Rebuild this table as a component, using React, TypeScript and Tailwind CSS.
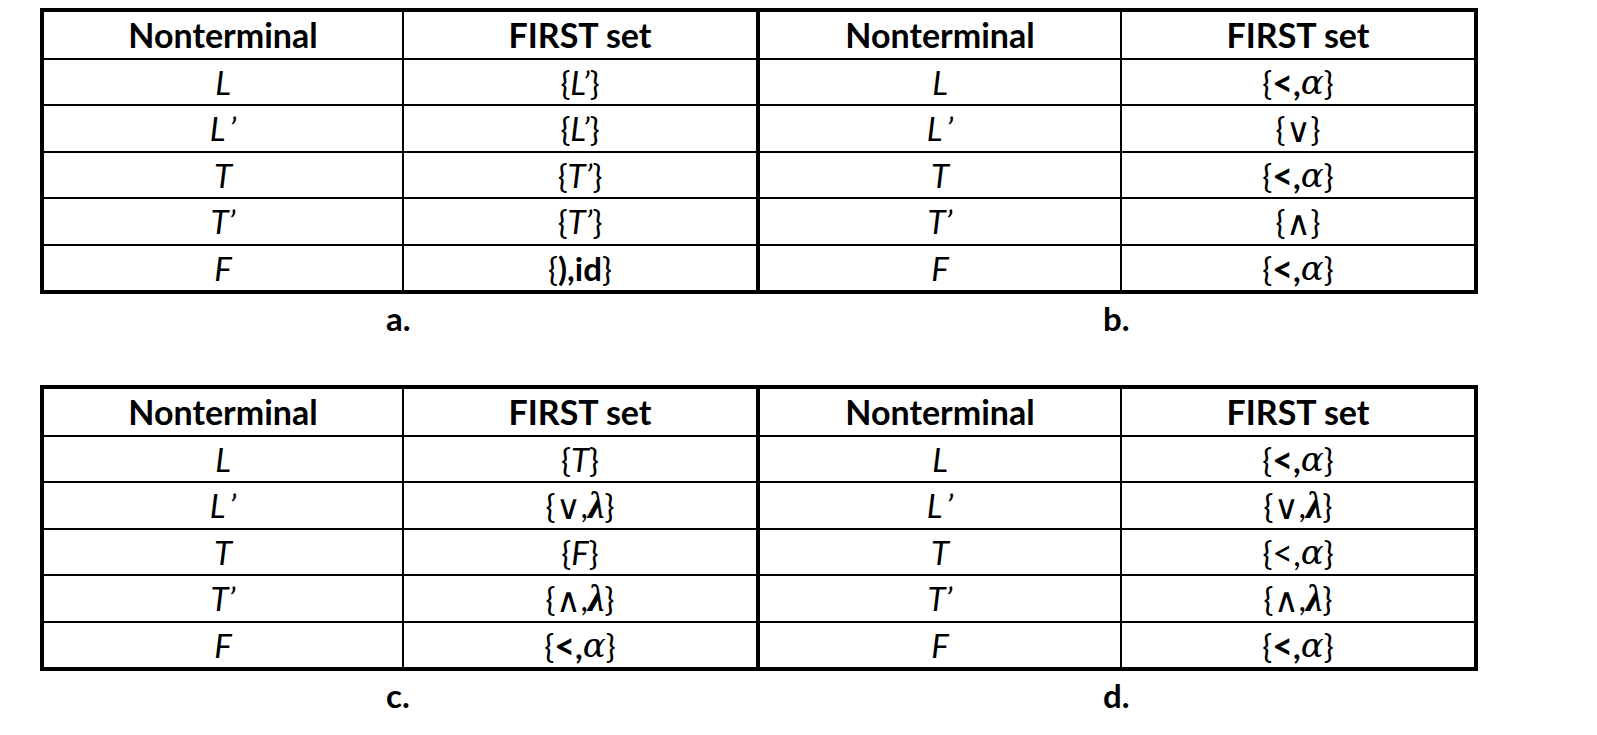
import React from "react";

const serif = { fontFamily: '"Liberation Serif", "DejaVu Serif", serif' };
const dejavu = { fontFamily: '"DejaVu Serif", "Liberation Serif", serif' };

const I = ({ children }: { children: React.ReactNode }) => (
  <span className="italic">{children}</span>
);

const Alpha = () => (
  <span className="italic text-[34px] leading-none" style={dejavu}>
    α
  </span>
);

const Lambda = () => (
  <span className="font-bold italic text-[37px] leading-none" style={serif}>
    λ
  </span>
);

const Lt = ({ bold = true }: { bold?: boolean }) => (
  <span className={bold ? "font-bold" : ""}>
    <span className="text-[36px] leading-none">&lt;</span>,
  </span>
);

const Or = () => <span className="text-[34px] leading-none">∨</span>;
const And = () => <span className="text-[34px] leading-none">∧</span>;

type Row = [React.ReactNode, React.ReactNode, React.ReactNode, React.ReactNode];

const names = [
  <I>L</I>,
  <I>L{"\u2009"}’</I>,
  <I>T</I>,
  <I>T’</I>,
  <I>F</I>,
];

const ltAlpha = (bold = true) => (
  <>
    {"{"}
    <Lt bold={bold} />
    <Alpha />
    {"}"}
  </>
);

const topRows: Row[] = [
  [names[0], <>{"{"}<I>L’</I>{"}"}</>, names[0], ltAlpha()],
  [names[1], <>{"{"}<I>L’</I>{"}"}</>, names[1], <>{"{"}<Or />{"}"}</>],
  [names[2], <>{"{"}<I>T’</I>{"}"}</>, names[2], ltAlpha()],
  [names[3], <>{"{"}<I>T’</I>{"}"}</>, names[3], <>{"{"}<And />{"}"}</>],
  [names[4], <>{"{"}<span className="font-bold">),id</span>{"}"}</>, names[4], ltAlpha()],
];

const bottomRows: Row[] = [
  [names[0], <>{"{"}<I>T</I>{"}"}</>, names[0], ltAlpha()],
  [
    names[1],
    <>{"{"}<Or />,<Lambda /> {"}"}</>,
    names[1],
    <>{"{"}<Or />,<Lambda /> {"}"}</>,
  ],
  [names[2], <>{"{"}<I>F</I>{"}"}</>, names[2], ltAlpha(false)],
  [
    names[3],
    <>{"{"}<And />,<Lambda />{"}"}</>,
    names[3],
    <>{"{"}<And />,<Lambda />{"}"}</>,
  ],
  [names[4], ltAlpha(), names[4], ltAlpha()],
];

const rowHeights = ["h-[46px]", "h-[47px]", "h-[46px]", "h-[47px]", "h-[46px]"];
const colBorders = ["border-r-2", "border-r-4", "border-r-2", ""];

const FirstTable = ({ rows }: { rows: Row[] }) => (
  <div className="grid w-[1438px] grid-cols-[360px_356px_362px_352px] border-4 border-black">
    {["Nonterminal", "FIRST set", "Nonterminal", "FIRST set"].map((h, i) => (
      <div
        key={h + i}
        className={`flex h-[46px] items-center justify-center border-black text-[34px] font-bold ${colBorders[i]}`}
      >
        {h}
      </div>
    ))}
    {rows.map((row, r) =>
      row.map((cell, c) => (
        <div
          key={`${r}-${c}`}
          className={`flex items-center justify-center border-t-2 border-black whitespace-pre ${rowHeights[r]} ${colBorders[c]}`}
        >
          {cell}
        </div>
      )),
    )}
  </div>
);

const Labels = ({ left, right }: { left: string; right: string }) => (
  <div className="flex h-[91px] w-[1438px] font-bold">
    <div className="w-[718px] pl-[346px] pt-[8px]">{left}</div>
    <div className="pl-[345px] pt-[8px]">{right}</div>
  </div>
);

export default function App() {
  return (
    <div
      className="min-h-screen bg-white pl-[40px] pt-[8px] text-[33px] leading-none text-black"
      style={{ fontFamily: 'Lato, "Open Sans", sans-serif' }}
    >
      <FirstTable rows={topRows} />
      <Labels left="a." right="b." />
      <FirstTable rows={bottomRows} />
      <Labels left="c." right="d." />
    </div>
  );
}
